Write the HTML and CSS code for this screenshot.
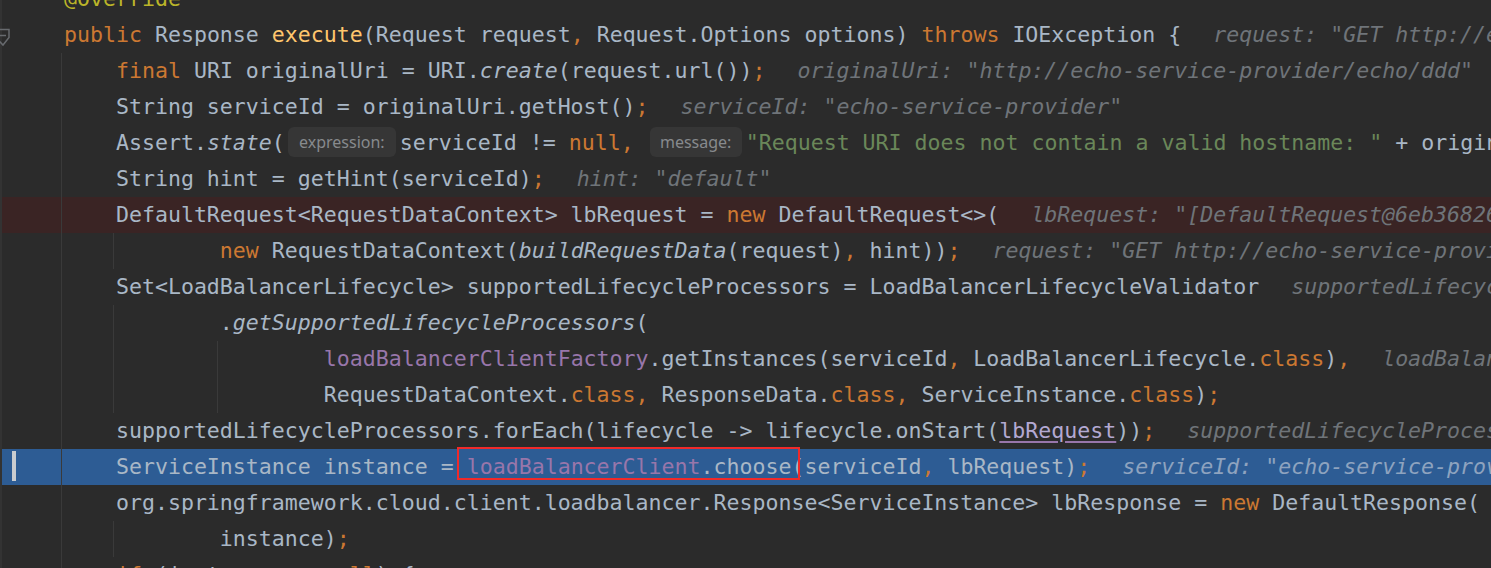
FILE: index.html
```html
<!DOCTYPE html>
<html lang="en">
<head>
  <meta charset="UTF-8">
  <title>LoadBalancer debug</title>
  <link rel="stylesheet" href="styles.css">
</head>
<body>
  <div class="editor">
    <div class="line"><span class="gutter"></span><span class="code">    <span class="a">@Override</span></span></div>
    <div class="line"><span class="gutter"><svg class="fold" width="10" height="36" viewBox="0 0 10 36"><path d="M-6 12.5 H7 V20.5 L1 28 L-6 20.5" fill="none" stroke="#676a6e" stroke-width="1.5"/><path d="M-2 18.5 H4" stroke="#676a6e" stroke-width="1.5"/></svg></span><span class="code">    <span class="k">public</span> Response <span class="m">execute</span>(Request request<span class="k">,</span> Request.Options options) <span class="k">throws</span> IOException {<span class="h">request: "GET http://echo-service-provider/echo/ddd HTTP/1.1"</span></span></div>
    <div class="line g1"><span class="gutter"></span><span class="code">        <span class="k">final</span> URI originalUri = URI.<span class="i">create</span>(request.url())<span class="k">;</span><span class="h">originalUri: "http://echo-service-provider/echo/ddd"</span></span></div>
    <div class="line g1"><span class="gutter"></span><span class="code">        String serviceId = originalUri.getHost()<span class="k">;</span><span class="h">serviceId: "echo-service-provider"</span></span></div>
    <div class="line g1"><span class="gutter"></span><span class="code">        Assert.<span class="i">state</span>(<span class="param p-expr">expression:</span>serviceId != <span class="k">null,</span> <span class="param p-msg">message:</span><span class="s">"Request URI does not contain a valid hostname: "</span> + originalUri)<span class="k">;</span></span></div>
    <div class="line g1"><span class="gutter"></span><span class="code">        String hint = getHint(serviceId)<span class="k">;</span><span class="h">hint: "default"</span></span></div>
    <div class="line g1 bp"><span class="gutter"></span><span class="code">        DefaultRequest&lt;RequestDataContext&gt; lbRequest = <span class="k">new</span> DefaultRequest&lt;&gt;(<span class="h">lbRequest: "[DefaultRequest@6eb36826 context = ...]"</span></span></div>
    <div class="line g2"><span class="gutter"></span><span class="code">                <span class="k">new</span> RequestDataContext(<span class="i">buildRequestData</span>(request)<span class="k">,</span> hint))<span class="k">;</span><span class="h">request: "GET http://echo-service-provider/echo/ddd HTTP/1.1"</span></span></div>
    <div class="line g1"><span class="gutter"></span><span class="code">        Set&lt;LoadBalancerLifecycle&gt; supportedLifecycleProcessors = LoadBalancerLifecycleValidator<span class="h">supportedLifecycleProcessors: size = 0</span></span></div>
    <div class="line g2"><span class="gutter"></span><span class="code">                .<span class="i">getSupportedLifecycleProcessors</span>(</span></div>
    <div class="line g3"><span class="gutter"></span><span class="code">                        <span class="f">loadBalancerClientFactory</span>.getInstances(serviceId<span class="k">,</span> LoadBalancerLifecycle.<span class="k">class</span>)<span class="k">,</span><span class="h">loadBalancerClientFactory: LoadBalancerClientFactory@7001</span></span></div>
    <div class="line g3"><span class="gutter"></span><span class="code">                        RequestDataContext.<span class="k">class,</span> ResponseData.<span class="k">class,</span> ServiceInstance.<span class="k">class</span>)<span class="k">;</span></span></div>
    <div class="line g1"><span class="gutter"></span><span class="code">        supportedLifecycleProcessors.forEach(lifecycle -&gt; lifecycle.onStart(<span class="u">lbRequest</span>))<span class="k">;</span><span class="h">supportedLifecycleProcessors: size = 0</span></span></div>
    <div class="line g1 exec"><span class="gutter"><span class="exec-mark"></span></span><span class="code">        ServiceInstance instance = <span class="mark"><span class="f">loadBalancerClient</span>.choose(</span>serviceId<span class="k">,</span> lbRequest)<span class="k">;</span><span class="h">serviceId: "echo-service-provider"</span></span></div>
    <div class="line g1"><span class="gutter"></span><span class="code">        org.springframework.cloud.client.loadbalancer.Response&lt;ServiceInstance&gt; lbResponse = <span class="k">new</span> DefaultResponse(</span></div>
    <div class="line g2"><span class="gutter"></span><span class="code">                instance)<span class="k">;</span></span></div>
    <div class="line g1"><span class="gutter"></span><span class="code">        <span class="k">if</span> (instance == <span class="k">null</span>) {</span></div>
  </div>
</body>
</html>
```
FILE: styles.css
```css
html, body {
  margin: 0;
  height: 100%;
  overflow: hidden;
  background: #2b2b2b;
}
.editor {
  margin-top: -19px;
  border-left: 2px solid #333333;
  font-family: "DejaVu Sans Mono", "Liberation Mono", monospace;
  font-size: 21.58px;
  color: #a9b7c6;
}
.line {
  display: flex;
  height: 36px;
  line-height: 36px;
  white-space: pre;
  background-repeat: no-repeat;
}
.gutter {
  flex-shrink: 0;
  width: 10px;
  height: 36px;
}
.fold {
  display: block;
  overflow: visible;
}
.exec-mark {
  display: block;
  width: 4px;
  height: 30px;
  margin: 2px 0 0 10px;
  background: #c9ccd0;
}
.code {
  display: block;
}

/* indent guides */
.g1 {
  background-image: linear-gradient(#3a3a3a, #3a3a3a);
  background-size: 1px 100%;
  background-position: 59px 0;
}
.g2 {
  background-image: linear-gradient(#3a3a3a, #3a3a3a), linear-gradient(#3a3a3a, #3a3a3a);
  background-size: 1px 100%, 1px 100%;
  background-position: 59px 0, 111px 0;
}
.g3 {
  background-image: linear-gradient(#3a3a3a, #3a3a3a), linear-gradient(#3a3a3a, #3a3a3a), linear-gradient(#3a3a3a, #3a3a3a);
  background-size: 1px 100%, 1px 100%, 1px 100%;
  background-position: 59px 0, 111px 0, 215px 0;
}
.bp {
  background-color: #3a2424;
}
.exec {
  background-color: #2d5c94;
}

/* syntax */
.k { color: #cc7832; }
.m { color: #ffc66d; }
.s { color: #6a8759; }
.a { color: #bbb529; }
.f { color: #9876aa; }
.i { font-style: italic; }
.u {
  color: #b3a9d2;
  text-decoration: underline;
  text-decoration-color: #9876aa;
  text-underline-offset: 3px;
}
.h {
  margin-left: 32px;
  font-style: italic;
  color: #6f7479;
}
.exec .h {
  color: #8ea3bf;
}
.param {
  display: inline-block;
  vertical-align: top;
  height: 30px;
  margin: 2px 4px 0 3px;
  line-height: 30px;
  border-radius: 6px;
  background: #363636;
  color: #878a8d;
  font-family: "Noto Sans", "Open Sans", sans-serif;
  font-size: 16px;
  font-style: normal;
  text-align: center;
}
.p-expr { width: 108px; }
.p-msg { width: 92px; }
.mark {
  display: inline-block;
  position: relative;
}
.mark::after {
  content: "";
  position: absolute;
  left: -10px;
  top: -2px;
  width: 343px;
  height: 33px;
  box-sizing: border-box;
  border: 2px solid #f02a2a;
}
```
